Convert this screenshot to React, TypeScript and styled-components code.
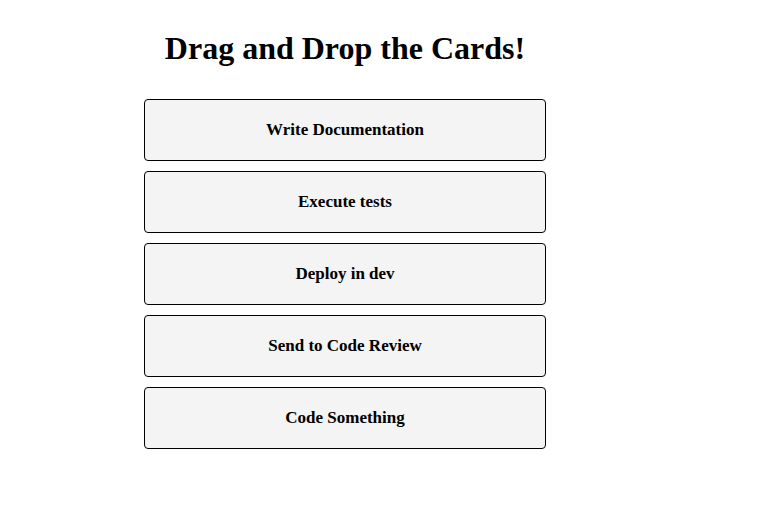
import React from 'react'
import styled, { createGlobalStyle } from 'styled-components'

const GlobalStyle = createGlobalStyle`
  body {
    margin: 8px;
    background: #ffffff;
    font-family: "Liberation Serif", "Times New Roman", serif;
    color: #000000;
  }
`

const Board = styled.div`
  width: 402px;
  margin-left: 136px;
  display: flex;
  flex-direction: column;
`

const Title = styled.h1`
  font-size: 32px;
  font-weight: bold;
  text-align: center;
  margin: 22px 0 32px;
`

const CardList = styled.div`
  display: flex;
  flex-direction: column;
  gap: 10px;
`

const Card = styled.div`
  height: 60px;
  display: flex;
  align-items: center;
  justify-content: center;
  background: #f4f4f4;
  border: 1px solid #000000;
  border-radius: 4px;
  font-size: 17px;
  font-weight: bold;
  cursor: grab;
`

const cards = [
  'Write Documentation',
  'Execute tests',
  'Deploy in dev',
  'Send to Code Review',
  'Code Something',
]

const App = () => {
  return (
    <>
      <GlobalStyle />
      <Board>
        <Title>Drag and Drop the Cards!</Title>
        <CardList>
          {cards.map((c) => (
            <Card key={c} draggable>{c}</Card>
          ))}
        </CardList>
      </Board>
    </>
  )
}

export default App
